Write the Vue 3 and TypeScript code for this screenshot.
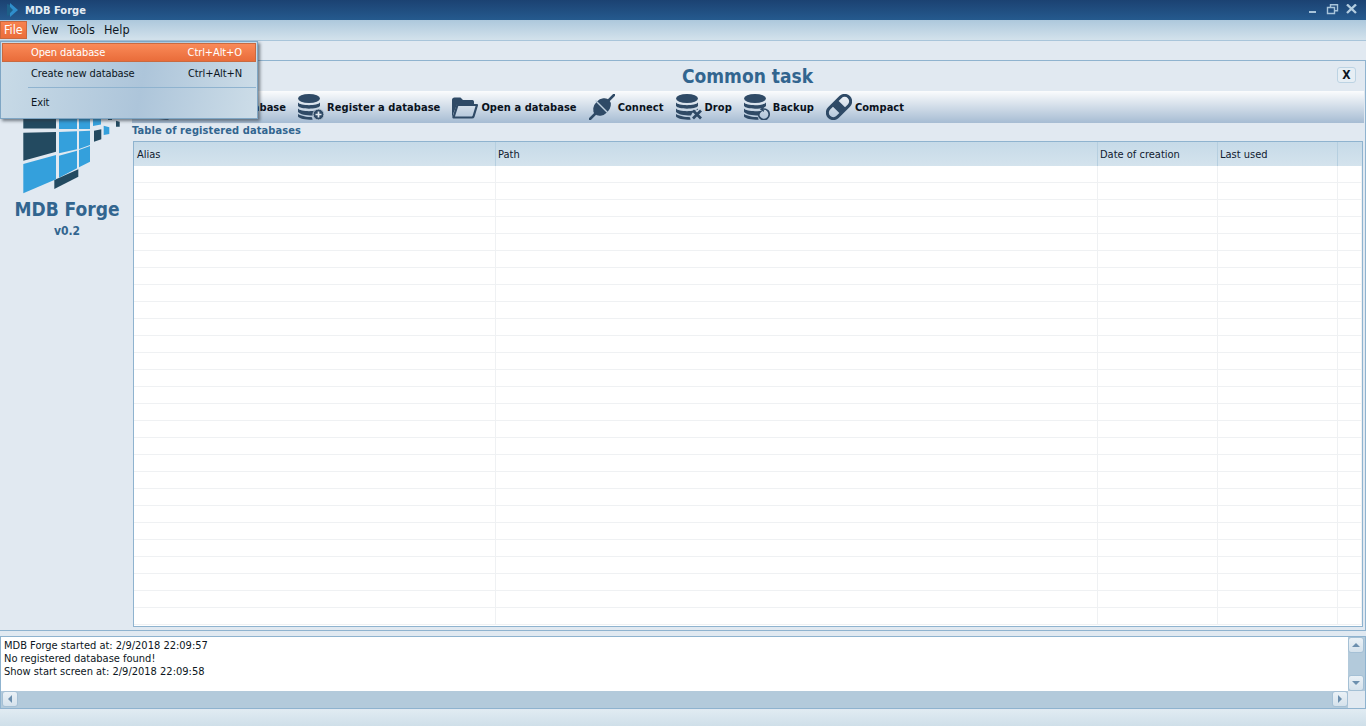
<script setup lang="ts">
const rows = Array.from({ length: 27 }, (_, i) => i)
const columns = [
  { name: 'Alias', width: 362 },
  { name: 'Path', width: 602 },
  { name: 'Date of creation', width: 120 },
  { name: 'Last used', width: 120 },
]
const logLines = [
  'MDB Forge started at: 2/9/2018 22:09:57',
  'No registered database found!',
  'Show start screen at: 2/9/2018 22:09:58',
]
const stack = 'M0 8.500c2 3.500 20 3.500 22 0v3.500c-2 3.500-20 3.500-22 0zM0 14.500c2 3.500 20 3.500 22 0v1.200c-3 .3-6 2.300-7 5.800-7 0-13-1-15-3.500zM0 20c3 2 9 3 14 3.200l.6 2.600C7 25.800 1 24.500 0 22.500z'
</script>

<template>
  <div class="app">
    <header class="titlebar">
      <svg class="app-icon" width="11" height="14" viewBox="0 0 11 14">
        <path d="M0 1l3 1v10l-3 1z" fill="#1d5f88" />
        <path d="M3 4l3 3-3 3z" fill="#1d5f88" />
        <path d="M3 0l8 7-8 7V10l3-3-3-3z" fill="#2f8fcc" />
      </svg>
      <span class="app-title">MDB Forge</span>
      <div class="window-buttons">
        <svg width="60" height="12" viewBox="0 0 60 12">
          <path d="M6 7h7v2H6z" fill="#a8c4da" />
          <path d="M24.500 3.500h7v6h-7zM27.500 3V.700h7v6h-3" fill="none" stroke="#a8c4da" stroke-width="1.400" />
          <path d="M44 .500l9 8.500M53 .500l-9 8.500" stroke="#b4cde0" stroke-width="2.400" />
        </svg>
      </div>
    </header>

    <nav class="menubar">
      <span class="menu-item active">File</span>
      <span class="menu-item">View</span>
      <span class="menu-item">Tools</span>
      <span class="menu-item">Help</span>
    </nav>

    <div class="band"></div>

    <main class="panel">
      <aside class="brand">
        <svg class="logo" width="102" height="95" viewBox="20 100 102 95">
          <g fill="#234a60">
            <path d="M23.300 105H56v23.500H23.300z" />
            <path d="M23.300 132.700L56 132v19.700l-32.700 9z" />
            <path d="M54.300 180l24-10.700v7.400l-24 12.300z" />
            <path d="M94 130.700l7.300-1.400v10l-7.300 2.400z" />
            <path d="M116 120.700l3.700 1v5H116z" />
            <path d="M108 112h4v8h-4z" />
          </g>
          <g fill="#34a0dc">
            <path d="M59 105h18v24H59z" />
            <path d="M79 105h11v24H79z" />
            <path d="M93 105h8v19.500l-8 1.500z" />
            <path d="M59 132l18-.7v18l-18 4z" />
            <path d="M79 131.300l11-.6V145l-11 4z" />
            <path d="M23.300 164L56 155v24.300l-32.700 14z" />
            <path d="M59 155.700l18-5v17.600l-18 9.400z" />
            <path d="M79 150l11-4v15.700l-11 5.600z" />
            <path d="M103.700 125.700l5.600 1.600V134l-5.600 1z" />
          </g>
        </svg>
        <div class="brand-name">MDB Forge</div>
        <div class="brand-version">v0.2</div>
      </aside>

      <section class="content">
        <div class="task-header">
          <h1 class="task-title">Common task</h1>
          <button class="close-btn">X</button>
        </div>

        <div class="toolbar">
          <div class="tool">
            <svg width="26" height="26" viewBox="0 0 26 26">
              <ellipse cx="11" cy="4.500" rx="11" ry="4.500" fill="#2f4a66" />
              <path :d="stack" fill="#2f4a66" />
            </svg>
            <span>Create a database</span>
          </div>
          <div class="tool">
            <svg width="26" height="26" viewBox="0 0 26 26">
              <ellipse cx="11" cy="4.500" rx="11" ry="4.500" fill="#2f4a66" />
              <path :d="stack" fill="#2f4a66" />
              <circle cx="20.500" cy="20.500" r="5.500" fill="#2f4a66" stroke="#c3d1de" stroke-width="1" />
              <path d="M17.500 20.500h6M20.500 17.500v6" stroke="#dfe7ee" stroke-width="1.700" />
            </svg>
            <span>Register a database</span>
          </div>
          <div class="tool">
            <svg width="26" height="26" viewBox="0 0 26 26">
              <path d="M0 24V6c0-1.500 1-2.500 2.500-2.500h6l2.500 2.500h9.500c1 0 1.500 1 1.500 2v2.500H5L1.500 19z" fill="#2f4a66" />
              <path d="M5.500 11h19.500l-3.500 11.500c-.3.700-.8 1-1.500 1H1.500z" fill="none" stroke="#2f4a66" stroke-width="2.200" stroke-linejoin="round" />
            </svg>
            <span>Open a database</span>
          </div>
          <div class="tool">
            <svg width="26" height="26" viewBox="0 0 26 26">
              <path d="M1 25L8 18M18 8L25 1" stroke="#2f4a66" stroke-width="2.500" stroke-linecap="round" />
              <ellipse cx="13" cy="13" rx="10" ry="7.500" transform="rotate(-45 13 13)" fill="#2f4a66" />
              <path d="M6.500 6.500l13 13" stroke="#c0d0de" stroke-width="1.400" />
            </svg>
            <span>Connect</span>
          </div>
          <div class="tool">
            <svg width="26" height="26" viewBox="0 0 26 26">
              <ellipse cx="11" cy="4.500" rx="11" ry="4.500" fill="#2f4a66" />
              <path :d="stack" fill="#2f4a66" />
              <path d="M17 16.500l8 8M25 16.500l-8 8" stroke="#2f4a66" stroke-width="2.800" />
            </svg>
            <span>Drop</span>
          </div>
          <div class="tool">
            <svg width="26" height="26" viewBox="0 0 26 26">
              <ellipse cx="11" cy="4.500" rx="11" ry="4.500" fill="#2f4a66" />
              <path :d="stack" fill="#2f4a66" />
              <path d="M19.800 15a5.300 5.300 0 1 1-5 3.800" fill="none" stroke="#2f4a66" stroke-width="1.700" />
              <path d="M19.800 12.500v5.500l-4-2.800z" fill="#2f4a66" />
            </svg>
            <span>Backup</span>
          </div>
          <div class="tool">
            <svg width="26" height="26" viewBox="0 0 26 26">
              <g transform="rotate(-45 13 13)">
                <path fill-rule="evenodd" fill="#2f4a66" d="M5 5.500h16a7.500 7.500 0 0 1 0 15H5a7.500 7.500 0 0 1 0-15zM9 8.500H5a4.500 4.500 0 0 0 0 9h4zM17 8.500h4a4.500 4.500 0 0 1 0 9h-4z" />
              </g>
            </svg>
            <span>Compact</span>
          </div>
        </div>

        <div class="table-caption">Table of registered databases</div>

        <div class="table">
          <div class="table-head">
            <div v-for="c in columns" :key="c.name" class="th" :style="{ width: c.width + 'px' }">{{ c.name }}</div>
            <div class="th spare"></div>
          </div>
          <div class="table-body">
            <div v-for="r in rows" :key="r" class="tr">
              <div v-for="c in columns" :key="c.name" class="td" :style="{ width: c.width + 'px' }"></div>
              <div class="td spare"></div>
            </div>
          </div>
        </div>
      </section>
    </main>

    <section class="log">
      <div class="log-main">
        <div class="log-text">
          <div v-for="l in logLines" :key="l">{{ l }}</div>
        </div>
        <div class="vscroll">
          <div class="sbtn"><span class="arrow up"></span></div>
          <div class="sbtn"><span class="arrow down"></span></div>
        </div>
      </div>
      <div class="hscroll-row">
        <div class="hscroll">
          <div class="sbtn h"><span class="arrow left"></span></div>
          <div class="sbtn h"><span class="arrow right"></span></div>
        </div>
        <div class="corner"></div>
      </div>
    </section>

    <footer class="statusbar"></footer>

    <div class="dropdown">
      <div class="dd-item selected"><span>Open database</span><span class="sc">Ctrl+Alt+O</span></div>
      <div class="dd-item"><span>Create new database</span><span class="sc">Ctrl+Alt+N</span></div>
      <div class="dd-sep"></div>
      <div class="dd-item exit"><span>Exit</span></div>
    </div>
  </div>
</template>

<style>
html, body { margin: 0; padding: 0; background: #e1e9f1; }
</style>

<style scoped>
.app {
  position: relative;
  width: 1366px;
  height: 726px;
  overflow: hidden;
  display: flex;
  flex-direction: column;
  background: #e1e9f1;
  font-family: "DejaVu Sans Condensed", "DejaVu Sans", sans-serif;
  font-size: 11px;
  color: #0c1622;
}
.titlebar {
  height: 20px;
  display: flex;
  align-items: center;
  background: linear-gradient(#1b4272, #255a8e);
  color: #e6eef5;
  flex: none;
}
.app-icon { margin-left: 7px; }
.app-title { margin-left: 7px; font-weight: bold; }
.window-buttons { margin-left: auto; margin-right: 3px; display: flex; }
.menubar {
  height: 20px;
  flex: none;
  display: flex;
  align-items: center;
  background: linear-gradient(#adc8dc, #d3e2ec);
  font-size: 12.5px;
  box-sizing: border-box;
}
.menu-item { padding: 0 4px; height: 18px; line-height: 18px; margin-right: 1px; }
.menu-item.active {
  background: linear-gradient(#f8834f, #ea6c39);
  box-shadow: inset 0 0 0 1px #c9683d;
  color: #fff;
}
.band { height: 20px; flex: none; border-top: 1px solid #a9c5da; box-sizing: border-box; }
.panel {
  flex: none;
  height: 571px;
  display: flex;
  border: 1px solid #8fb3cf;
  border-left: 0;
  box-sizing: border-box;
}
.brand {
  width: 132px;
  flex: none;
  display: flex;
  flex-direction: column;
  align-items: center;
  padding-top: 39px;
  box-sizing: border-box;
}
.logo { margin-left: 10px; flex: none; }
.brand-name {
  font-size: 19px;
  font-weight: bold;
  color: #32658f;
  margin: 3px 0 0 2px;
  line-height: 22px;
}
.brand-version {
  font-size: 12px;
  font-weight: bold;
  color: #32658f;
  margin: 4px 0 0 2px;
  line-height: 14px;
}
.content { flex: 1; min-width: 0; display: flex; flex-direction: column; }
.task-header { height: 30px; display: flex; align-items: center; justify-content: center; position: relative; flex: none; }
.task-title {
  margin: 0 0 0 -2px;
  font-size: 19px;
  font-weight: bold;
  color: #32658f;
}
.close-btn {
  position: absolute;
  right: 9px;
  top: 6px;
  width: 19px;
  height: 16px;
  padding: 0;
  border: 1px solid #bcd3e3;
  border-radius: 3px;
  background: #e6eef4;
  font: bold 12px "DejaVu Sans Condensed", "DejaVu Sans", sans-serif;
  color: #0b1520;
}
.toolbar {
  height: 32px;
  flex: none;
  display: flex;
  align-items: center;
  padding-left: 22px;
  margin-right: 1px;
  background: linear-gradient(#fbfcfd, #a6bcd3);
  font-weight: bold;
  letter-spacing: 0.06px;
  color: #0a121c;
  box-sizing: border-box;
}
.tool { display: flex; align-items: center; gap: 3px; margin-right: 12px; white-space: nowrap; }
.tool svg { flex: none; }
.table-caption { height: 18px; line-height: 16px; font-weight: bold; letter-spacing: 0.1px; color: #32658f; flex: none; }
.table {
  margin: 0 2px 0 1px;
  border: 1px solid #8fb3cf;
  height: 486px;
  overflow: hidden;
  flex: none;
  box-sizing: border-box;
  background: #fff;
}
.table-head { height: 24px; display: flex; background: linear-gradient(#c6dae8, #d4e3ed); }
.th {
  box-sizing: border-box;
  border-right: 1px solid #b6cfe0;
  padding: 6px 2px 0;
  line-height: 14px;
  flex: none;
  color: #10202f;
}
.th:first-child { padding-left: 3px; }
.spare { flex: 1; width: auto; border-right: 0; }
.table-body { display: flex; flex-direction: column; }
.tr { height: 17px; display: flex; box-sizing: border-box; border-bottom: 1px solid #eff1f3; flex: none; }
.td { box-sizing: border-box; border-right: 1px solid #eff1f3; flex: none; }
.td.spare { flex: 1; }
.log {
  margin-top: 5px;
  flex: none;
  height: 73px;
  border: 1px solid #8fb3cf;
  box-sizing: border-box;
  display: flex;
  flex-direction: column;
}
.log-main { flex: 1; display: flex; min-height: 0; }
.log-text { flex: 1; background: #fff; padding: 2px 3px; line-height: 13px; }
.vscroll {
  width: 17px;
  background: #b3cadb;
  display: flex;
  flex-direction: column;
  justify-content: space-between;
}
.hscroll-row { height: 17px; display: flex; flex: none; }
.hscroll {
  flex: 1;
  padding-left: 1px;
  background: #b3cadb;
  display: flex;
  justify-content: space-between;
}
.corner { width: 17px; background: #e1e9f1; }
.sbtn {
  width: 16px;
  height: 16px;
  box-sizing: border-box;
  border: 1px solid #a5c0d5;
  border-radius: 3px;
  background: linear-gradient(#eaf1f6, #d5e2ec);
  display: flex;
  align-items: center;
  justify-content: center;
}
.arrow { width: 0; height: 0; border: 4px solid transparent; }
.arrow.up { border-bottom-color: #6c8fae; border-top: 0; }
.arrow.down { border-top-color: #6c8fae; border-bottom: 0; }
.arrow.left { border-right-color: #6c8fae; border-left: 0; }
.arrow.right { border-left-color: #6c8fae; border-right: 0; }
.statusbar {
  flex: 1;
  background: linear-gradient(#e0ebf2, #cfdfe9);
  margin-top: 1px;
}
.dropdown {
  position: absolute;
  left: 0;
  top: 41px;
  width: 258px;
  height: 78px;
  box-sizing: border-box;
  padding: 1px;
  border: 1px solid #7fa6c4;
  background: linear-gradient(100deg, #c9dbe7, #adc5da 55%, #cddde8);
  box-shadow: 2px 2px 3px rgba(40, 50, 60, 0.6);
  letter-spacing: -0.1px;
}
.dd-item {
  height: 19px;
  line-height: 18px;
  box-sizing: border-box;
  display: flex;
  justify-content: space-between;
  padding: 0 14px 0 29px;
  margin-bottom: 2px;
}
.dd-item.selected {
  background: linear-gradient(#fa8a58, #e96c3a);
  border: 1px solid #c96a40;
  padding: 0 13px 0 28px;
  margin-bottom: 3px;
  color: #fff;
}
.dd-sep { height: 1px; background: #8fb3cf; margin: 3px 0 6px 26px; }
.exit { margin: 0; }
</style>
